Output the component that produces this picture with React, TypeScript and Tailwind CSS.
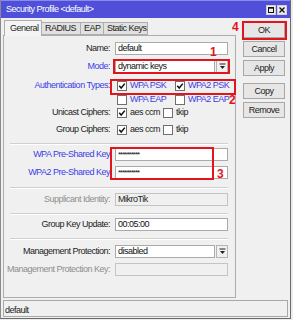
import React from "react";

function Check({ checked }: { checked: boolean }) {
  return (
    <span className="w-[10px] h-[10px] border border-[#6f6f6f] bg-white flex items-center justify-center shrink-0">
      {checked && (
        <svg width="8" height="8" viewBox="0 0 8 8">
          <path d="M1.2 3.8 L3.2 6 L6.8 1.6" stroke="#111" strokeWidth="1.5" fill="none" />
        </svg>
      )}
    </span>
  );
}

function Arrow() {
  return (
    <svg width="7" height="7" viewBox="0 0 7 7">
      <path d="M0.5 1 H6.5" stroke="#222" strokeWidth="1" />
      <path d="M1 3 H6 L3.5 6 Z" fill="#222" />
    </svg>
  );
}

function Input({ text, disabled }: { text: string; disabled?: boolean }) {
  return (
    <div
      className={
        disabled
          ? "w-[113px] h-[13px] border border-[#c4c4c4] bg-[#f0f0f0] flex items-center pl-[2px] text-[#222]"
          : "w-[113px] h-[13px] border border-[#aaaaaa] bg-white flex items-center pl-[2px] text-[#111]"
      }
    >
      {text}
    </div>
  );
}

function Select({ text }: { text: string }) {
  return (
    <div className="w-[113px] h-[13px] flex gap-[1px]">
      <div className="flex-1 border border-[#aaaaaa] bg-white flex items-center pl-[2px] text-[#111]">{text}</div>
      <div className="w-[12px] border border-[#b4b4b4] bg-[#f0f0f0] flex items-center justify-center">
        <Arrow />
      </div>
    </div>
  );
}

function Pwd() {
  return (
    <div className="w-[113px] h-[13px] border border-[#aaaaaa] bg-white flex items-center pl-[2px] text-[#111] text-[8px] tracking-[-1px]">
      **********
    </div>
  );
}

function Sep({ mt }: { mt: string }) {
  return <div className={mt + " ml-[6px] w-[218px] h-[2px] border-t border-t-[#d0d0d0] border-b border-b-white"} />;
}

function Btn({ label, mt }: { label: string; mt: string }) {
  return (
    <div className={mt + " w-[42px] h-[16px] border border-[#a8a8a8] bg-[#e6e6e6] flex items-center justify-center text-[#222]"}>
      {label}
    </div>
  );
}

export default function App() {
  const blue = "text-[#3c3ce6]";
  const gray = "text-[#8e8e8e]";
  const black = "text-[#1c1c1c]";
  return (
    <div className="w-[293px] h-[320px] bg-[#ececec] relative overflow-hidden font-['Liberation_Sans',Arial,sans-serif] text-[9px] tracking-[-0.5px] leading-none">
      <div className="w-[291px] h-[319px] flex flex-col bg-[#f0f0f0] border-l border-l-[#8a8a8a] border-r border-r-[#6a6a6a] border-b border-b-[#6a6a6a]">
        {/* title bar */}
        <div className="h-[18px] bg-[#4f4fd9] border-t border-t-[#8a8ae8] flex items-center justify-between pl-[5px] pr-[3px] text-white">
          <span>Security Profile &lt;default&gt;</span>
          <div className="flex gap-[1px]">
            <div className="w-[10px] h-[10px] bg-[#ededed] border border-[#d0d0d0] flex items-center justify-center">
              <svg width="6" height="6" viewBox="0 0 6 6">
                <rect x="0.5" y="0.5" width="5" height="5" fill="none" stroke="#111" />
                <path d="M0.5 1.2 H5.5" stroke="#111" />
              </svg>
            </div>
            <div className="w-[10px] h-[10px] bg-[#ededed] border border-[#d0d0d0] flex items-center justify-center">
              <svg width="6" height="6" viewBox="0 0 6 6">
                <path d="M0.5 0.5 L5.5 5.5 M5.5 0.5 L0.5 5.5" stroke="#111" strokeWidth="1.4" />
              </svg>
            </div>
          </div>
        </div>

        {/* body */}
        <div className="h-[282px] flex">
          {/* left column */}
          <div className="w-[235px] pl-[2px] pt-[2px] flex flex-col">
            <div className="flex items-end h-[16px] pl-[1px] relative z-10">
              <div className="w-[38px] h-[16px] border border-[#adadad] border-b-0 bg-[#f4f4f4] flex items-center pl-[5px] text-[#1c1c1c] pb-[1px]">
                General
              </div>
              <div className="w-[39px] h-[13px] border border-[#adadad] border-l-0 bg-[#e1e1e1] flex items-center pl-[3px] text-[#1c1c1c] mb-[1px]">
                RADIUS
              </div>
              <div className="w-[23px] h-[13px] border border-[#adadad] border-l-0 bg-[#e1e1e1] flex items-center pl-[3px] text-[#1c1c1c] mb-[1px]">
                EAP
              </div>
              <div className="w-[44px] h-[13px] border border-[#adadad] border-l-0 bg-[#e1e1e1] flex items-center pl-[3px] text-[#1c1c1c] mb-[1px]">
                Static Keys
              </div>
            </div>
            <div className="-mt-[1px] w-[233px] h-[263px] border border-[#adadad] bg-[#f0f0f0] flex flex-col">
              <div className="flex items-center h-[13px] mt-[6px]">
                <div className={"w-[106px] text-right " + black}>Name:</div>
                <div className="ml-[5px]"><Input text="default" /></div>
              </div>
              <div className="flex items-center h-[13px] mt-[5px]">
                <div className={"w-[106px] text-right " + blue}>Mode:</div>
                <div className="ml-[5px]"><Select text="dynamic keys" /></div>
              </div>
              <div className="flex items-center h-[13px] mt-[6px]">
                <div className={"w-[106px] text-right whitespace-nowrap " + blue}>Authentication Types:</div>
                <div className="ml-[5px] pl-[2px] flex items-center">
                  <div className="w-[58px] flex items-center gap-[3px]"><Check checked /><span className={blue}>WPA PSK</span></div>
                  <div className="flex items-center gap-[3px]"><Check checked /><span className={blue}>WPA2 PSK</span></div>
                </div>
              </div>
              <div className="flex items-center h-[13px] mt-[1px]">
                <div className="w-[106px]" />
                <div className="ml-[5px] pl-[2px] flex items-center">
                  <div className="w-[58px] flex items-center gap-[3px]"><Check checked={false} /><span className={blue}>WPA EAP</span></div>
                  <div className="flex items-center gap-[3px]"><Check checked={false} /><span className={blue}>WPA2 EAP</span></div>
                </div>
              </div>
              <div className="flex items-center h-[13px]">
                <div className={"w-[106px] text-right " + black}>Unicast Ciphers:</div>
                <div className="ml-[5px] pl-[2px] flex items-center">
                  <div className="w-[46px] flex items-center gap-[3px]"><Check checked /><span className={black}>aes ccm</span></div>
                  <div className="flex items-center gap-[3px]"><Check checked={false} /><span className={black}>tkip</span></div>
                </div>
              </div>
              <div className="flex items-center h-[13px] mt-[4px]">
                <div className={"w-[106px] text-right " + black}>Group Ciphers:</div>
                <div className="ml-[5px] pl-[2px] flex items-center">
                  <div className="w-[46px] flex items-center gap-[3px]"><Check checked /><span className={black}>aes ccm</span></div>
                  <div className="flex items-center gap-[3px]"><Check checked={false} /><span className={black}>tkip</span></div>
                </div>
              </div>
              <Sep mt="mt-[7px]" />
              <div className="flex items-center h-[13px] mt-[3px]">
                <div className={"w-[106px] text-right whitespace-nowrap " + blue}>WPA Pre-Shared Key</div>
                <div className="ml-[5px]"><Pwd /></div>
              </div>
              <div className="flex items-center h-[13px] mt-[5px]">
                <div className={"w-[106px] text-right whitespace-nowrap " + blue}>WPA2 Pre-Shared Key</div>
                <div className="ml-[5px]"><Pwd /></div>
              </div>
              <Sep mt="mt-[8px]" />
              <div className="flex items-center h-[13px] mt-[4px]">
                <div className={"w-[106px] text-right whitespace-nowrap " + gray}>Supplicant Identity:</div>
                <div className="ml-[5px]"><Input text="MikroTik" disabled /></div>
              </div>
              <Sep mt="mt-[7px]" />
              <div className="flex items-center h-[13px] mt-[3px]">
                <div className={"w-[106px] text-right whitespace-nowrap " + black}>Group Key Update:</div>
                <div className="ml-[5px]"><Input text="00:05:00" /></div>
              </div>
              <Sep mt="mt-[7px]" />
              <div className="flex items-center h-[13px] mt-[5px]">
                <div className={"w-[106px] text-right whitespace-nowrap " + black}>Management Protection:</div>
                <div className="ml-[5px]"><Select text="disabled" /></div>
              </div>
              <div className="flex items-center h-[13px] mt-[5px]">
                <div className={"w-[106px] text-right whitespace-nowrap " + gray}>Management Protection Key:</div>
                <div className="ml-[5px]"><Input text="" disabled /></div>
              </div>
            </div>
          </div>

          {/* right column */}
          <div className="flex-1 pl-[7px] pt-[4px] flex flex-col">
            <Btn label="OK" mt="mt-0" />
            <Btn label="Cancel" mt="mt-[3px]" />
            <Btn label="Apply" mt="mt-[3px]" />
            <Btn label="Copy" mt="mt-[7px]" />
            <Btn label="Remove" mt="mt-[3px]" />
          </div>
        </div>

        {/* status bar */}
        <div className="ml-[2px] w-[285px] h-[17px] border border-[#a8a8a8] flex items-center pl-[1px] pt-[3px] text-[#1c1c1c]">
          default
        </div>
      </div>

      {/* annotations */}
      <div className="absolute left-[113px] top-[59px] w-[117px] h-[15px] border-2 border-[#e3141c]" />
      <div className="absolute left-[110px] top-[79px] w-[126px] h-[16px] border-2 border-[#e3141c]" />
      <div className="absolute left-[110px] top-[147px] w-[104px] h-[33px] border-2 border-[#e3141c]" />
      <div className="absolute left-[242px] top-[21px] w-[45px] h-[19px] border-2 border-[#e3141c]" />
      <div className="absolute left-[210px] top-[46px] text-[12px] font-bold text-[#e3141c] tracking-normal">1</div>
      <div className="absolute left-[229px] top-[94px] text-[12px] font-bold text-[#e3141c] tracking-normal">2</div>
      <div className="absolute left-[217px] top-[168px] text-[12px] font-bold text-[#e3141c] tracking-normal">3</div>
      <div className="absolute left-[232px] top-[21px] text-[12px] font-bold text-[#e3141c] tracking-normal">4</div>
    </div>
  );
}
